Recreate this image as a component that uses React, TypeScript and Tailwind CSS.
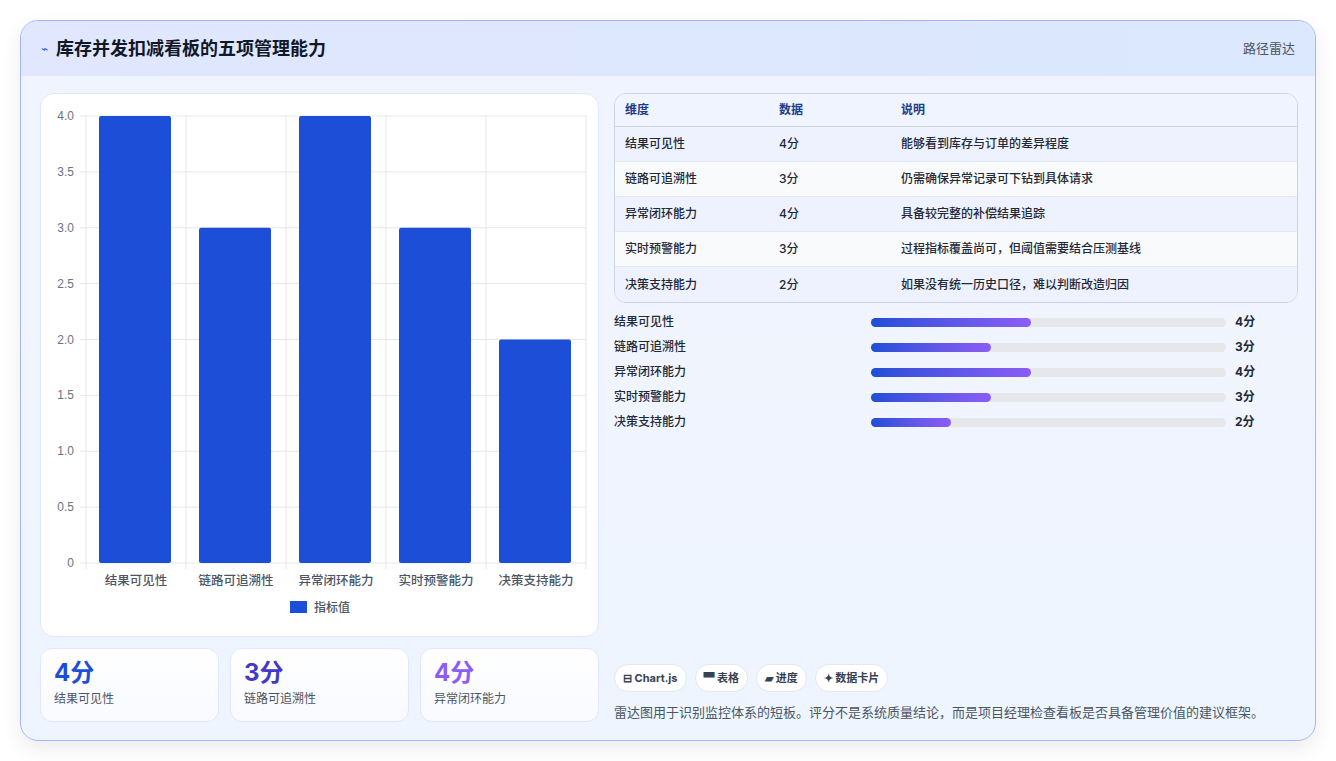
import React from "react";

const rows = [
  ["结果可见性", 4, "能够看到库存与订单的差异程度"],
  ["链路可追溯性", 3, "仍需确保异常记录可下钻到具体请求"],
  ["异常闭环能力", 4, "具备较完整的补偿结果追踪"],
  ["实时预警能力", 3, "过程指标覆盖尚可，但阈值需要结合压测基线"],
  ["决策支持能力", 2, "如果没有统一历史口径，难以判断改造归因"],
] as const;

function Chart() {
  const L = 45, R = 545, T = 22, B = 469;
  const ticks = [0, 0.5, 1, 1.5, 2, 2.5, 3, 3.5, 4];
  const y = (v: number) => B - (v / 4) * (B - T);
  const cw = (R - L) / 5;
  return (
    <svg width="558" height="543" style={{ fontFamily: "'Noto Sans CJK SC', sans-serif" }}>
      {ticks.map((t) => (
        <g key={t}>
          <line x1={L - 6} x2={R} y1={y(t)} y2={y(t)} stroke="#e5e7eb" />
          <text x={33} y={y(t) + 4} textAnchor="end" fontSize="12" fill="#6b7280" fontFamily="'Liberation Sans', sans-serif">
            {t === 0 ? "0" : t.toFixed(1)}
          </text>
        </g>
      ))}
      {[0, 1, 2, 3, 4, 5].map((i) => (
        <line key={i} x1={L + i * cw} x2={L + i * cw} y1={T} y2={B + 6} stroke="#e5e7eb" />
      ))}
      {rows.map((r, i) => (
        <g key={i}>
          <rect x={L + i * cw + 13} y={y(r[1])} width={72} height={B - y(r[1])} rx={2} fill="#1d4ed8" />
          <text x={L + i * cw + cw / 2} y={491} textAnchor="middle" fontSize="12.5" fill="#4b5563" fontWeight="500">
            {r[0]}
          </text>
        </g>
      ))}
      <rect x={249} y={507} width={17} height={12} fill="#1d4ed8" />
      <text x={273} y={518} fontSize="12" fill="#4b5563" fontWeight="500">指标值</text>
    </svg>
  );
}

export default function App() {
  return (
    <div className="w-[1336px] h-[761px] bg-white p-[20px] pb-0" style={{ fontFamily: "Inter, 'Noto Sans CJK SC', sans-serif" }}>
      <div className="h-[721px] rounded-[18px] border border-[#a5b4fc] bg-gradient-to-b from-[#f1f4fe] to-[#eef5fe] shadow-[0_8px_20px_rgba(0,0,0,0.08)] overflow-hidden flex flex-col">
        <div className="h-[55px] shrink-0 flex items-center justify-between px-[20px] bg-gradient-to-r from-[#e0e7ff] to-[#dbe8fd]">
          <div className="flex items-center gap-[8px]">
            <span className="text-[#2563eb] text-[12px]">⌁</span>
            <span className="text-[18px] font-bold text-[#111827]">库存并发扣减看板的五项管理能力</span>
          </div>
          <span className="text-[13px] text-[#4b5563]">路径雷达</span>
        </div>
        <div className="flex gap-[15px] px-[19px] pt-[17px]">
          <div className="w-[559px] flex flex-col gap-[11px]">
            <div className="h-[544px] rounded-[14px] bg-white border border-[#e0e7ff]">
              <Chart />
            </div>
            <div className="flex gap-[11px]">
              {[["4分", "结果可见性", "text-[#1d4ed8]"], ["3分", "链路可追溯性", "text-[#4338ca]"], ["4分", "异常闭环能力", "text-[#8b5cf6]"]].map(([v, l, c]) => (
                <div key={l} className="w-[179px] h-[74px] rounded-[12px] bg-gradient-to-b from-white to-[#f8faff] border border-[#e0e7ff] px-[13px] pt-[10px]">
                  <div className={`text-[24px] font-bold leading-[28px] ${c}`}>{v}</div>
                  <div className="text-[12px] text-[#4b5563] mt-[3px]">{l}</div>
                </div>
              ))}
            </div>
          </div>
          <div className="flex-1 flex flex-col">
            <div className="w-[684px] rounded-[12px] border border-[#cbd5e1] overflow-hidden text-[12px]">
              <div className="flex h-[33px] items-center bg-[#eff4ff] font-bold text-[#1e3a8a] border-b border-[#cbd5e1]">
                <div className="w-[164px] pl-[10px]">维度</div>
                <div className="w-[122px]">数据</div>
                <div>说明</div>
              </div>
              {rows.map((r, i) => (
                <div key={i} className={`flex h-[35px] items-center text-[#1f2937] font-medium ${i % 2 ? "bg-[#f8fafc]" : "bg-[#eef2ff]"} ${i < 4 ? "border-b border-[#e2e8f0]" : ""}`}>
                  <div className="w-[164px] pl-[10px]">{r[0]}</div>
                  <div className="w-[122px]">{r[1]}分</div>
                  <div>{r[2]}</div>
                </div>
              ))}
            </div>
            <div className="mt-[12px] flex flex-col gap-[11px]">
              {rows.map((r, i) => (
                <div key={i} className="flex items-center h-[14px] text-[12px] font-medium text-[#1f2937]">
                  <div className="w-[257px]">{r[0]}</div>
                  <div className="w-[355px] h-[9px] rounded-full bg-[#e5e7eb]">
                    <div className="h-full rounded-full bg-gradient-to-r from-[#1d4ed8] to-[#8b5cf6]" style={{ width: r[1] * 40 }} />
                  </div>
                  <div className="ml-[9px] font-bold">{r[1]}分</div>
                </div>
              ))}
            </div>
            <div className="mt-auto flex gap-[8px]">
              {["⊟ Chart.js", "▀ 表格", "▰ 进度", "✦ 数据卡片"].map((t) => (
                <span key={t} className="h-[28px] px-[8px] flex items-center rounded-full bg-white border border-[#e5e7eb] text-[11px] font-bold text-[#374151]">{t}</span>
              ))}
            </div>
            <div className="mt-[10px] text-[13px] text-[#4b5563] leading-[20px]">雷达图用于识别监控体系的短板。评分不是系统质量结论，而是项目经理检查看板是否具备管理价值的建议框架。</div>
          </div>
        </div>
      </div>
    </div>
  );
}
